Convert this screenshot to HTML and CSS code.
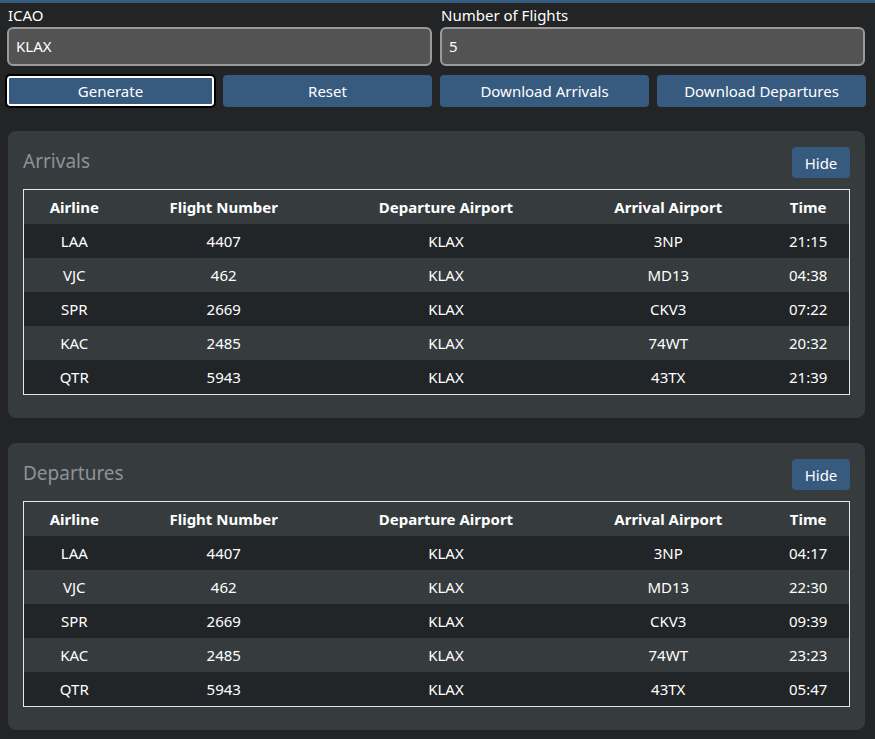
FILE: index.html
```html
<!DOCTYPE html>
<html>
<head>
<meta charset="utf-8">
<link rel="stylesheet" href="styles.css">
</head>
<body>
<div class="topbar"></div>
<div class="page">
  <div class="fields">
    <div class="field">
      <label>ICAO</label>
      <div class="input">KLAX</div>
    </div>
    <div class="field">
      <label>Number of Flights</label>
      <div class="input">5</div>
    </div>
  </div>
  <div class="buttons">
    <button class="btn focus">Generate</button>
    <button class="btn">Reset</button>
    <button class="btn">Download Arrivals</button>
    <button class="btn">Download Departures</button>
  </div>

  <section class="card">
    <div class="card-head">
      <h2>Arrivals</h2>
      <button class="hide">Hide</button>
    </div>
    <table>
      <colgroup><col class="c1"><col class="c2"><col class="c3"><col class="c4"><col class="c5"></colgroup>
      <thead><tr><th>Airline</th><th>Flight Number</th><th>Departure Airport</th><th>Arrival Airport</th><th>Time</th></tr></thead>
      <tbody>
        <tr><td>LAA</td><td>4407</td><td>KLAX</td><td>3NP</td><td>21:15</td></tr>
        <tr><td>VJC</td><td>462</td><td>KLAX</td><td>MD13</td><td>04:38</td></tr>
        <tr><td>SPR</td><td>2669</td><td>KLAX</td><td>CKV3</td><td>07:22</td></tr>
        <tr><td>KAC</td><td>2485</td><td>KLAX</td><td>74WT</td><td>20:32</td></tr>
        <tr><td>QTR</td><td>5943</td><td>KLAX</td><td>43TX</td><td>21:39</td></tr>
      </tbody>
    </table>
  </section>

  <section class="card">
    <div class="card-head">
      <h2>Departures</h2>
      <button class="hide">Hide</button>
    </div>
    <table>
      <colgroup><col class="c1"><col class="c2"><col class="c3"><col class="c4"><col class="c5"></colgroup>
      <thead><tr><th>Airline</th><th>Flight Number</th><th>Departure Airport</th><th>Arrival Airport</th><th>Time</th></tr></thead>
      <tbody>
        <tr><td>LAA</td><td>4407</td><td>KLAX</td><td>3NP</td><td>04:17</td></tr>
        <tr><td>VJC</td><td>462</td><td>KLAX</td><td>MD13</td><td>22:30</td></tr>
        <tr><td>SPR</td><td>2669</td><td>KLAX</td><td>CKV3</td><td>09:39</td></tr>
        <tr><td>KAC</td><td>2485</td><td>KLAX</td><td>74WT</td><td>23:23</td></tr>
        <tr><td>QTR</td><td>5943</td><td>KLAX</td><td>43TX</td><td>05:47</td></tr>
      </tbody>
    </table>
  </section>
</div>
</body>
</html>
```

FILE: styles.css
```css
html, body {
  margin: 0;
  padding: 0;
  background: #222426;
  color: #ffffff;
  font-family: "Noto Sans", "Open Sans", sans-serif;
  font-size: 15px;
}
.topbar {
  height: 3px;
  background: #375a7f;
}
.page {
  padding: 3px 10px 0 7px;
}
.fields {
  display: grid;
  grid-template-columns: 1fr 1fr;
  column-gap: 8px;
}
.field label {
  display: block;
  height: 21px;
  line-height: 18px;
  padding-left: 1px;
}
.input {
  height: 35px;
  border: 2px solid #9a9a9a;
  border-radius: 6px;
  background: #535353;
  line-height: 35px;
  padding-left: 7px;
}
.buttons {
  margin-top: 9px;
  display: grid;
  grid-template-columns: repeat(4, 1fr);
  column-gap: 8px;
  margin-left: -1px;
  margin-right: -1px;
}
.btn {
  height: 32px;
  border: none;
  border-radius: 4px;
  background: #375a7f;
  color: #fff;
  font-family: inherit;
  font-size: 15px;
  padding: 0;
}
.btn.focus {
  box-shadow: 0 0 0 1px #000, inset 0 0 0 2px #fff;
  border: 1px solid #000;
}
.card {
  background: #363b3e;
  border-radius: 8px;
  margin: 24px 0 25px 1px;
  padding: 16px 15px 23px 15px;
}
.card + .card {
  margin-top: 0;
}
.card-head {
  display: flex;
  justify-content: space-between;
  align-items: center;
  height: 31px;
  margin-bottom: 11px;
}
.card-head h2 {
  margin: 0;
  font-weight: normal;
  font-size: 19px;
  color: #8a9498;
  margin-top: -3px;
}
.hide {
  width: 58px;
  height: 31px;
  border: none;
  border-radius: 4px;
  background: #375a7f;
  color: #fff;
  font-family: inherit;
  font-size: 15px;
  padding: 0;
}
table {
  width: 100%;
  border-collapse: collapse;
  border: 1px solid #e6e6e6;
  table-layout: fixed;
}
.c1 { width: 101px; }
.c2 { width: 198px; }
.c3 { width: 246px; }
.c4 { width: 198px; }
.c5 { width: 82px; }
th, td {
  text-align: center;
  padding: 0;
}
th {
  height: 34px;
  font-weight: bold;
}
td {
  height: 34px;
}
tbody tr:nth-child(odd) {
  background: #222528;
}
```
